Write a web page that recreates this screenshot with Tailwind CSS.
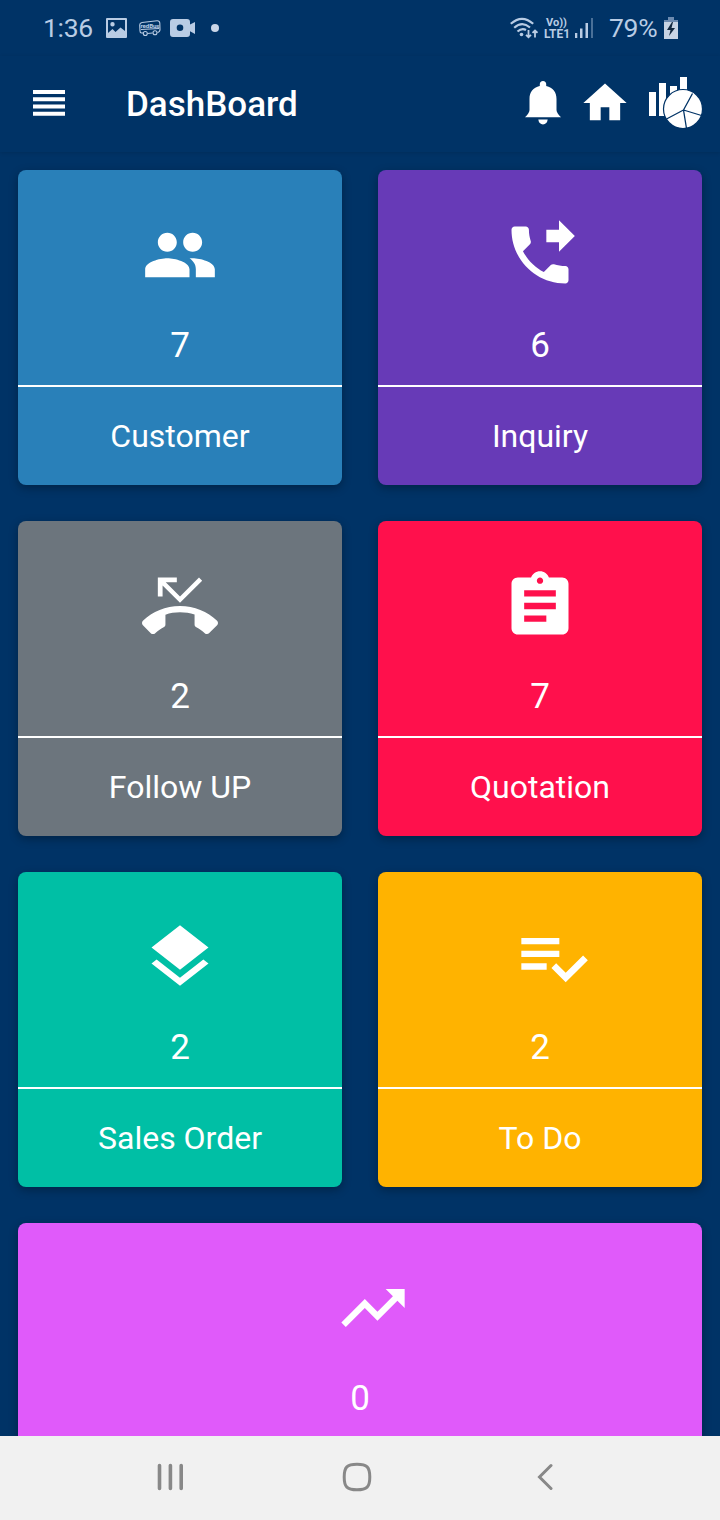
<!DOCTYPE html>
<html lang="en">
<head>
  <meta charset="UTF-8" />
  <meta name="viewport" content="width=device-width, initial-scale=1.0" />
  <title>DashBoard</title>
  <script src="https://cdn.jsdelivr.net/npm/@tailwindcss/browser@4"></script>
</head>
<body class="bg-[#003366] font-['Roboto',sans-serif] text-white">
  <div class="flex flex-col w-[720px] h-[1520px] overflow-hidden">

    <!-- Status bar -->
    <div class="flex items-center h-14 shrink-0 pl-[43px] pr-[42px] text-[#b9cce4]">
      <span class="w-[51px] pt-px text-[26.5px] leading-none tracking-[-0.3px] whitespace-nowrap">1:36</span>
      <svg class="ml-3 w-[21px] h-5" viewBox="0 0 21 20" fill="currentColor">
        <path fill-rule="evenodd" d="M1 0h19a1 1 0 0 1 1 1v18a1 1 0 0 1-1 1H1a1 1 0 0 1-1-1V1a1 1 0 0 1 1-1zM2 2v13l4.500-4 3 3 5-4.500L19 13V2zM6.500 4a2.200 2.200 0 1 1 0 4.400 2.200 2.200 0 0 1 0-4.400z" />
      </svg>
      <svg class="ml-3 w-[22px] h-[17px]" viewBox="0 0 22 17" fill="none" stroke="currentColor" stroke-width="1.100">
        <path d="M4 13H2.500Q1 13 1 11L.7 5Q.7 3 3 2.500L18 .8Q20.500.6 20.800 3L21 9.500Q21 12 18.500 12.500M8.500 13.500L13.500 13" />
        <circle cx="6.300" cy="13.500" r="2" />
        <circle cx="16" cy="12.700" r="2" />
        <path d="M2 9.500L20 8.500" />
        <text x="1.500" y="8.200" font-size="6.200" font-weight="700" fill="currentColor" stroke="none" textLength="19">redBus</text>
      </svg>
      <svg class="ml-[9px] w-[26px] h-[18px]" viewBox="0 0 26 18" fill="currentColor">
        <path fill-rule="evenodd" d="M3 0h14q3 0 3 3v2.500L25 3v12l-5-2.800V15q0 3-3 3H3q-3 0-3-3V3q0-3 3-3zm7 5.500a3.300 3.300 0 1 0 0 6.600 3.300 3.300 0 0 0 0-6.600z" />
      </svg>
      <span class="ml-[15px] size-2 rounded-full bg-[#c9d6e8]"></span>

      <div class="flex items-center ml-auto pb-px">
        <svg class="w-7 h-[22px]" viewBox="0 0 28 22" fill="none" stroke="currentColor" stroke-width="2.200">
          <path d="M.8 6.800Q12 -3.200 23.200 6.800M4.200 10.800Q12 3.800 20 10.500M7.500 14.500Q12 10.500 16 13" />
          <circle cx="11.500" cy="17.500" r="1.800" fill="currentColor" stroke="none" />
          <path d="M18.500 13v7M16 17.800l2.500 2.400 2.500-2.400M25 20.500v-7M22.500 15.800l2.500-2.400 2.500 2.400" stroke-width="1.800" />
        </svg>
        <svg class="ml-[6px] w-[26px] h-6" viewBox="0 0 26 24" fill="currentColor">
          <text x="2" y="10" font-size="11.500" font-weight="700" textLength="21" lengthAdjust="spacingAndGlyphs">Vo))</text>
          <text x="0" y="21.500" font-size="12.500" font-weight="700" textLength="26" lengthAdjust="spacingAndGlyphs">LTE1</text>
        </svg>
        <svg class="ml-[5px] w-[18px] h-5" viewBox="0 0 18 20" fill="currentColor">
          <path d="M0 15h2.300v5H0zM5 10.500h2.500V20H5zM10.500 5H13v15h-2.500z" />
          <path d="M16 0h2v20h-2z" opacity=".4" />
        </svg>
        <span class="ml-4 w-[51px] pt-0.5 text-[26.500px] leading-none tracking-[-0.3px] whitespace-nowrap text-[26.5px]">79%</span>
        <svg class="ml-[4px] w-[14px] h-[22px]" viewBox="0 0 14 22">
          <path d="M4 0h6v3h4v5H0V3h4z" fill="#6d8bb0" />
          <path d="M0 5h14v17H0z" fill="#c8d4e4" />
          <path d="M8 5L3 13h3.500L5 19l6-8H7.500L9 5z" fill="#12283f" />
        </svg>
      </div>
    </div>

    <!-- App bar -->
    <header class="flex items-center h-24 shrink-0 pl-[33px] pr-[17px] shadow-[0_1px_4px_rgba(0,0,0,0.12)]">
      <svg class="w-8 h-[26px] mb-0.5" viewBox="0 0 32 26" fill="currentColor">
        <path d="M0 0h32v4H0zM0 7.300h32v4H0zM0 14.600h32v4H0zM0 21.700h32v4H0z" />
      </svg>
      <h1 class="ml-[61px] text-[35px] font-medium leading-none">DashBoard</h1>
      <div class="flex items-center ml-auto">
        <svg class="w-9 h-11 mb-0.5" viewBox="0 0 36 44" fill="currentColor">
          <path d="M18 0a3.200 3.200 0 0 1 3.200 3.500V5C28 6.500 31.500 11 31.500 18v11c0 2 1.500 4.500 4.500 7.300H0C3 33.500 4.500 31 4.500 29V18C4.500 11 8 6.500 14.800 5V3.500A3.200 3.200 0 0 1 18 0zM13.300 38.600h9.400Q22 43.400 18 43.400T13.300 38.600z" />
        </svg>
        <svg class="ml-[18px] size-[52px] mb-[3px]" viewBox="0 0 24 24" fill="currentColor">
          <path d="M10 20v-6h4v6h5v-8h3L12 3 2 12h3v8z" />
        </svg>
        <svg class="ml-[18px] w-[54px] h-[52px] mb-0.5" viewBox="0 0 54 52">
          <path d="M0 15h7v24H0zM10 6h7v33h-7zM21 9h7v24h-7zM31 0h7v24h-7z" fill="#fff" />
          <circle cx="34" cy="32" r="19.500" fill="#fff" stroke="#003366" stroke-width="1.200" />
          <path d="M34.500 33L43.500 16.500M34.500 33L52.500 38.500M34.500 33L37.500 51.500M34.500 33L17.500 42" fill="none" stroke="#003366" stroke-width="1.300" />
        </svg>
      </div>
    </header>

    <!-- Cards -->
    <main id="cards" class="grid grid-cols-2 gap-9 content-start px-[18px] pt-[18px] flex-1 min-h-0 overflow-hidden"></main>

    <!-- Navigation bar -->
    <nav class="flex items-center h-[84px] shrink-0 pl-[157px] pb-[3px] bg-[#f1f1f1] text-[#888]">
      <svg class="w-[27px] h-7" viewBox="0 0 27 28" fill="none" stroke="currentColor" stroke-width="3.600" stroke-linecap="round">
        <path d="M2.500 2.500v23M13.400 2.500v23M24.200 2.500v23" />
      </svg>
      <svg class="ml-[158px] w-[30px] h-[30px]" viewBox="0 0 30 30" fill="none" stroke="currentColor" stroke-width="3">
        <path d="M15 2.200C25 2.200 27.800 5 27.800 15S25 27.800 15 27.800 2.200 25 2.200 15 5 2.200 15 2.200z" />
      </svg>
      <svg class="ml-[165px] w-4 h-7" viewBox="0 0 16 28" fill="none" stroke="currentColor" stroke-width="3" stroke-linecap="round">
        <path d="M14 2.500L2.500 14 14 25.500" />
      </svg>
    </nav>
  </div>

  <script>
    const cards = [
      { label: "Customer", count: 7, color: "bg-[#2980b9]", icon: "M16 11c1.660 0 2.990-1.340 2.990-3S17.660 5 16 5c-1.660 0-3 1.340-3 3s1.340 3 3 3zm-8 0c1.660 0 2.990-1.340 2.990-3S9.660 5 8 5C6.340 5 5 6.340 5 8s1.340 3 3 3zm0 2c-2.330 0-7 1.170-7 3.500V19h14v-2.500c0-2.330-4.670-3.500-7-3.500zm8 0c-.29 0-.62.020-.97.050 1.160.84 1.970 1.970 1.970 3.450V19h6v-2.500c0-2.330-4.670-3.500-7-3.500z" },
      { label: "Inquiry", count: 6, color: "bg-[#673ab7]", icon: "M18 11l5-5-5-5v3h-4v4h4v3zm2 4.500c-1.250 0-2.450-.2-3.570-.57-.35-.11-.74-.03-1.020.24l-2.200 2.200c-2.830-1.440-5.150-3.750-6.590-6.590l2.200-2.210c.28-.26.36-.65.25-1C8.700 6.450 8.500 5.250 8.500 4c0-.55-.45-1-1-1H4c-.55 0-1 .45-1 1 0 9.390 7.610 17 17 17 .55 0 1-.45 1-1v-3.500c0-.55-.45-1-1-1z" },
      { label: "Follow UP", count: 2, color: "bg-[#6c757d]", icon: "M6.500 5.500L12 11l7-7-1-1-6 6-4.500-4.500H11V3H5v6h1.500V5.500zm17.210 11.170C20.660 13.780 16.540 12 12 12 7.460 12 3.340 13.780.29 16.670c-.18.18-.29.43-.29.71 0 .28.11.53.29.71l2.480 2.480c.18.18.43.29.71.29.27 0 .52-.11.7-.28.79-.74 1.690-1.360 2.660-1.850.33-.16.56-.5.56-.9v-3.100c1.450-.48 3-.73 4.600-.73 1.600 0 3.150.25 4.600.72v3.100c0 .39.23.74.56.9.98.49 1.870 1.120 2.660 1.850.18.18.43.28.7.28.28 0 .53-.11.71-.29l2.480-2.480c.18-.18.29-.43.29-.71 0-.28-.12-.52-.3-.7z" },
      { label: "Quotation", count: 7, color: "bg-[#ff104c]", icon: "M19 3h-4.180C14.400 1.840 13.300 1 12 1c-1.300 0-2.400.84-2.820 2H5c-1.100 0-2 .9-2 2v14c0 1.100.9 2 2 2h14c1.100 0 2-.9 2-2V5c0-1.100-.9-2-2-2zm-7 0c.55 0 1 .45 1 1s-.45 1-1 1-1-.45-1-1 .45-1 1-1zm2 14H7v-2h7v2zm3-4H7v-2h10v2zm0-4H7V7h10v2z" },
      { label: "Sales Order", count: 2, color: "bg-[#00bfa5]", icon: "M11.990 18.540l-7.370-5.730L3 14.070l9 7 9-7-1.630-1.270-7.380 5.740zM12 16l7.360-5.730L21 9l-9-7-9 7 1.630 1.270L12 16z" },
      { label: "To Do", count: 2, color: "bg-[#ffb300]", shift: "pl-[26px]", icon: "M14 10H2v2h12v-2zm0-4H2v2h12V6zM2 16h8v-2H2v2zm19.500-4.500L23 13l-6.990 7-4.510-4.500L13 14l3.010 3 5.490-5.500z" },
      { label: "", count: 0, color: "bg-[#e05afa]", shift: "pl-[26px]", wide: "col-span-2", icon: "M16 6l2.290 2.290-4.880 4.880-4-4L2 16.590 3.410 18l6-6 4 4 6.300-6.290L22 12V6z" }
    ];

    document.getElementById("cards").innerHTML = cards.map(card => `
      <div class="flex flex-col h-[315px] rounded-lg shadow-[0_3px_10px_rgba(0,0,0,0.3)] ${card.color} ${card.wide || ""}">
        <div class="flex flex-col items-center h-[217px] pt-[47px] border-b-2 border-white">
          <div class="${card.shift || ""}">
            <svg class="block size-[76px]" viewBox="0 0 24 24" fill="currentColor"><path d="${card.icon}" /></svg>
          </div>
          <span class="mt-[33px] text-[35px] leading-[40px]">${card.count}</span>
        </div>
        <div class="flex flex-1 items-center justify-center text-[32px]">${card.label}</div>
      </div>
    `).join("");
  </script>
</body>
</html>
